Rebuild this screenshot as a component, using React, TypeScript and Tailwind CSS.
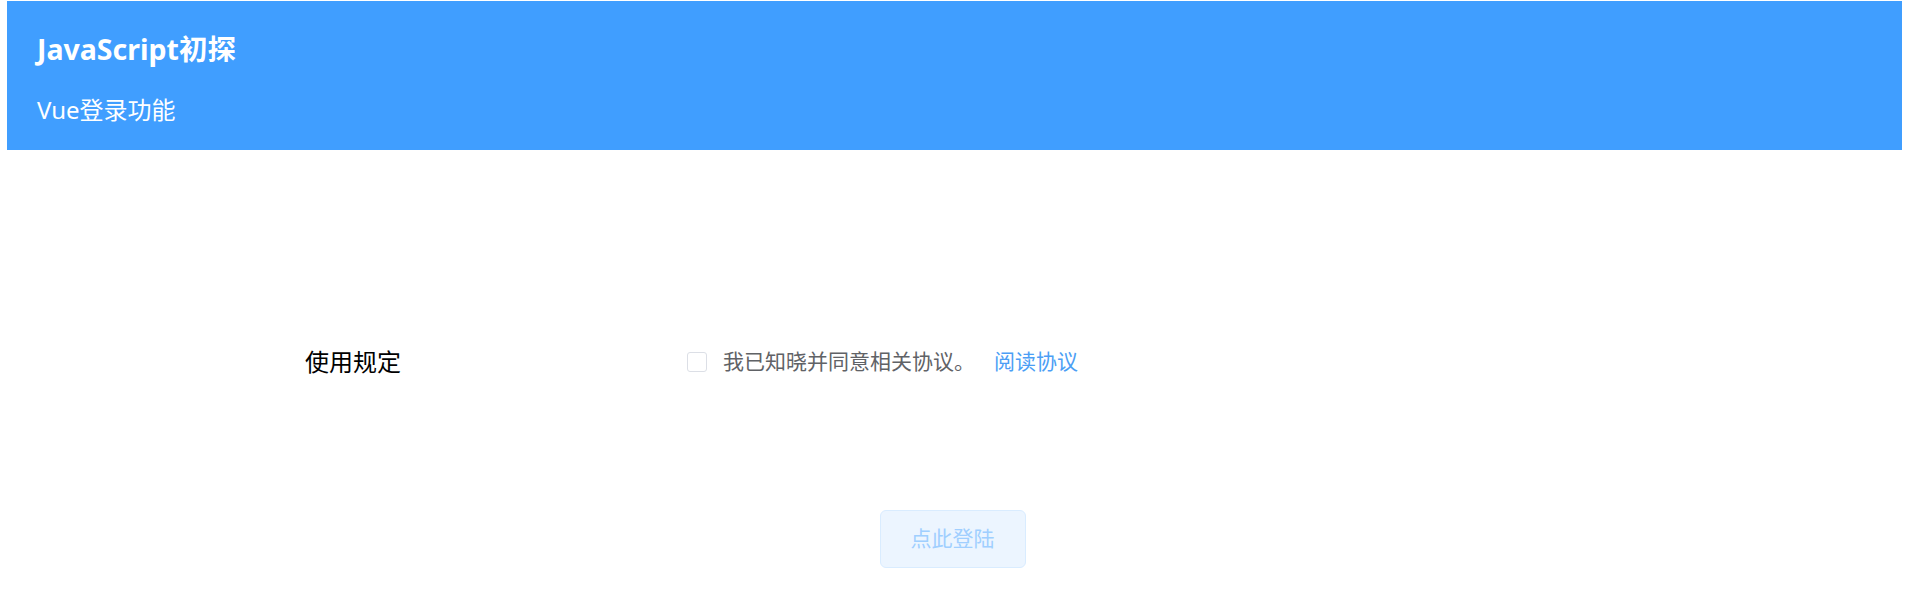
export default function App() {
  return (
    <div className="min-h-[614px] bg-white font-['Noto_Sans','Noto_Sans_CJK_SC',sans-serif]">
      <div className="pt-px pl-[7px] pr-[13px]">
        <div className="h-[149px] bg-[#409eff] px-[30px] pt-[28px] text-white">
          <h1 className="text-[28.5px] font-bold leading-[40px]">JavaScript初探</h1>
          <p className="mt-[25px] text-[24px] leading-[32px]">Vue登录功能</p>
        </div>
      </div>

      <div className="mt-[190px] flex items-center pl-[305px]">
        <span className="w-[382px] text-[24px] leading-[44px] text-black">使用规定</span>
        <label className="flex items-center">
          <span className="h-[20px] w-[20px] rounded-[3px] border border-[#dcdfe6] bg-white" />
          <span className="ml-[16px] text-[21px] text-[#606266]">我已知晓并同意相关协议。</span>
        </label>
        <a className="ml-[19px] text-[21px] text-[#4b9ef5]">阅读协议</a>
      </div>

      <div className="mt-[126px] flex justify-center pr-[10px]">
        <button className="h-[58px] w-[146px] rounded-[6px] border border-[#d9ecff] bg-[#ecf5ff] text-[21px] text-[#a0cfff]">
          点此登陆
        </button>
      </div>
    </div>
  );
}
